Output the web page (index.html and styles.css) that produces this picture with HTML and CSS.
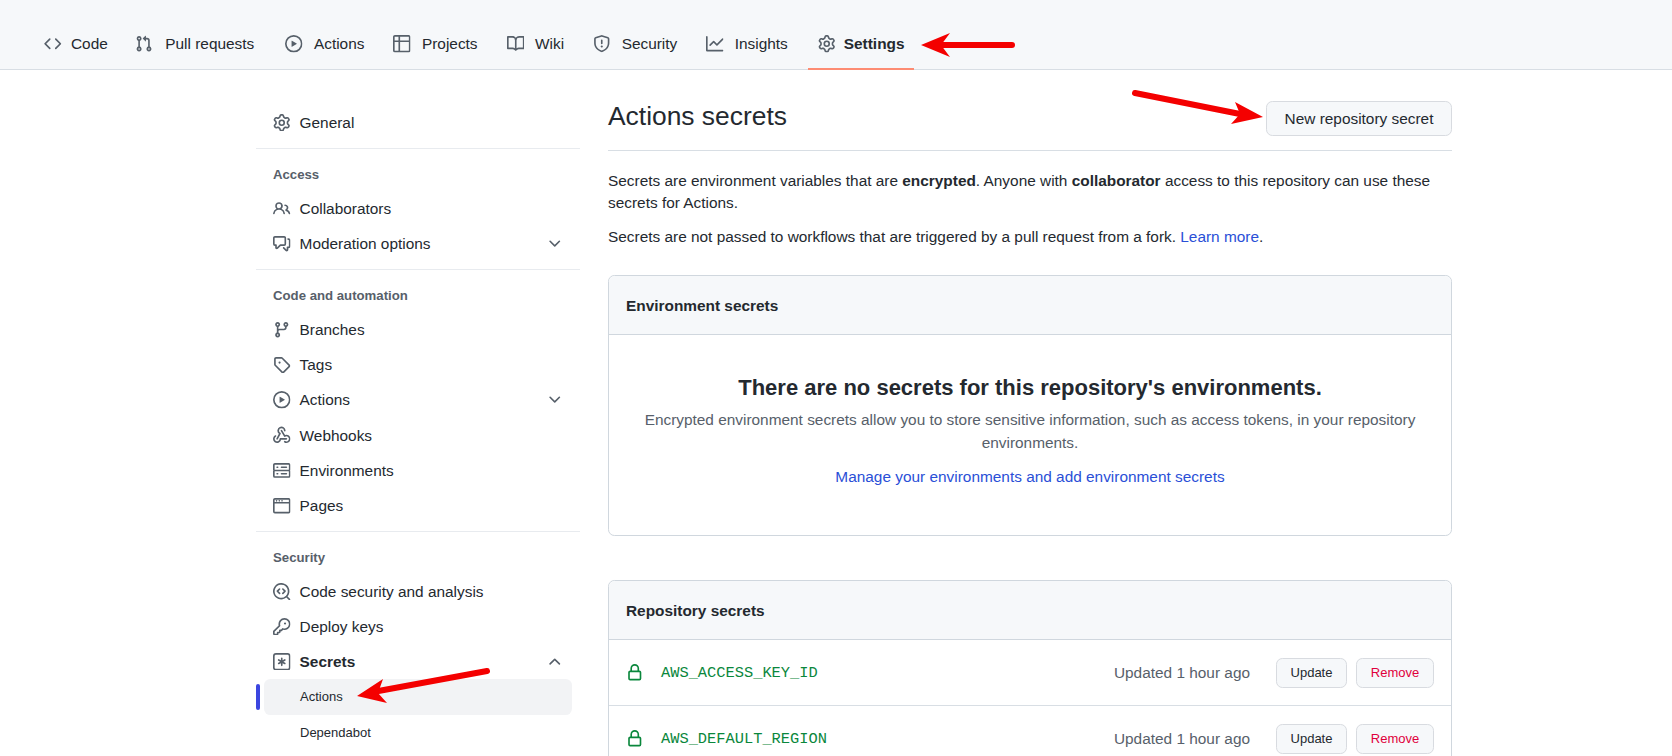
FILE: index.html
```html
<!DOCTYPE html>
<html lang="en">
<head>
    <meta charset="UTF-8">
    <meta name="viewport" content="width=device-width, initial-scale=1.0">
    <link rel="stylesheet" href="styles.css">
    <title>Actions secrets</title>
</head>
<body>
    <svg class="defs" width="0" height="0">
        <symbol id="i-code" viewBox="0 0 16 16"><path d="m11.28 3.22 4.25 4.25a.75.75 0 0 1 0 1.06l-4.25 4.25a.749.749 0 0 1-1.275-.326.749.749 0 0 1 .215-.734L13.94 8l-3.72-3.72a.749.749 0 0 1 .326-1.275.749.749 0 0 1 .734.215Zm-6.56 0a.751.751 0 0 1 1.042.018.751.751 0 0 1 .018 1.042L2.06 8l3.72 3.72a.749.749 0 0 1-.326 1.275.749.749 0 0 1-.734-.215L.47 8.53a.75.75 0 0 1 0-1.06Z"/></symbol>
        <symbol id="i-pr" viewBox="0 0 16 16"><path d="M1.5 3.25a2.25 2.25 0 1 1 3 2.122v5.256a2.251 2.251 0 1 1-1.5 0V5.372A2.25 2.25 0 0 1 1.5 3.25Zm5.677-.177L9.573.677A.25.25 0 0 1 10 .854V2.5h1A2.5 2.5 0 0 1 13.5 5v5.628a2.251 2.251 0 1 1-1.5 0V5a1 1 0 0 0-1-1h-1v1.646a.25.25 0 0 1-.427.177L7.177 3.427a.25.25 0 0 1 0-.354ZM3.75 2.5a.75.75 0 1 0 0 1.5.75.75 0 0 0 0-1.5Zm0 9.5a.75.75 0 1 0 0 1.5.75.75 0 0 0 0-1.5Zm8.25.75a.75.75 0 1 0 1.5 0 .75.75 0 0 0-1.5 0Z"/></symbol>
        <symbol id="i-play" viewBox="0 0 16 16"><path d="M8 0a8 8 0 1 1 0 16A8 8 0 0 1 8 0ZM1.5 8a6.5 6.5 0 1 0 13 0 6.5 6.5 0 0 0-13 0Zm4.879-2.773 4.264 2.559a.25.25 0 0 1 0 .428l-4.264 2.559A.25.25 0 0 1 6 10.559V5.442a.25.25 0 0 1 .379-.215Z"/></symbol>
        <symbol id="i-table" viewBox="0 0 16 16"><path d="M0 1.75C0 .784.784 0 1.75 0h12.5C15.216 0 16 .784 16 1.75v12.5A1.75 1.75 0 0 1 14.25 16H1.75A1.75 1.75 0 0 1 0 14.25ZM6.5 6.5v8h7.75a.25.25 0 0 0 .25-.25V6.5Zm8-1.5V1.75a.25.25 0 0 0-.25-.25H6.5V5Zm-13 1.5v7.75c0 .138.112.25.25.25H5v-8ZM5 5V1.5H1.75a.25.25 0 0 0-.25.25V5Z"/></symbol>
        <symbol id="i-book" viewBox="0 0 16 16"><path d="M0 1.75A.75.75 0 0 1 .75 1h4.253c1.227 0 2.317.59 3 1.501A3.743 3.743 0 0 1 11.006 1h4.245a.75.75 0 0 1 .75.75v10.5a.75.75 0 0 1-.75.75h-4.507a2.25 2.25 0 0 0-1.591.659l-.622.621a.75.75 0 0 1-1.06 0l-.622-.621A2.25 2.25 0 0 0 5.258 13H.75a.75.75 0 0 1-.75-.75Zm7.251 10.324.004-5.073-.002-2.253A2.25 2.25 0 0 0 5.003 2.5H1.5v9h3.757a3.75 3.75 0 0 1 1.994.574ZM8.755 4.75l-.004 7.322a3.752 3.752 0 0 1 1.992-.572H14.5v-9h-3.495a2.25 2.25 0 0 0-2.25 2.25Z"/></symbol>
        <symbol id="i-shield" viewBox="0 0 16 16"><path d="M7.467.133a1.748 1.748 0 0 1 1.066 0l5.25 1.68A1.75 1.75 0 0 1 15 3.48V7c0 1.566-.32 3.182-1.303 4.682-.983 1.498-2.585 2.813-5.032 3.855a1.697 1.697 0 0 1-1.33 0c-2.447-1.042-4.049-2.357-5.032-3.855C1.32 10.182 1 8.566 1 7V3.48a1.75 1.75 0 0 1 1.217-1.667Zm.61 1.429a.25.25 0 0 0-.153 0l-5.25 1.68a.25.25 0 0 0-.174.238V7c0 1.358.275 2.666 1.057 3.86.784 1.194 2.121 2.34 4.366 3.297a.196.196 0 0 0 .154 0c2.245-.956 3.582-2.104 4.366-3.298C13.225 9.666 13.5 8.36 13.5 7V3.48a.251.251 0 0 0-.174-.237l-5.25-1.68ZM8.75 4.75v3a.75.75 0 0 1-1.5 0v-3a.75.75 0 0 1 1.5 0ZM9 10.5a1 1 0 1 1-2 0 1 1 0 0 1 2 0Z"/></symbol>
        <symbol id="i-graph" viewBox="0 0 16 16"><path d="M1.5 1.75V13.5h13.75a.75.75 0 0 1 0 1.5H.75a.75.75 0 0 1-.75-.75V1.75a.75.75 0 0 1 1.5 0Zm14.28 2.53-5.25 5.25a.75.75 0 0 1-1.06 0L7 7.06 4.28 9.78a.751.751 0 0 1-1.042-.018.751.751 0 0 1-.018-1.042l3.25-3.25a.75.75 0 0 1 1.06 0L10 7.94l4.72-4.72a.751.751 0 0 1 1.042.018.751.751 0 0 1 .018 1.042Z"/></symbol>
        <symbol id="i-gear" viewBox="0 0 16 16"><path d="M8 0a8.2 8.2 0 0 1 .701.031C9.444.095 9.99.645 10.16 1.29l.288 1.107c.018.066.079.158.212.224.231.114.454.243.668.386.123.082.233.09.299.071l1.103-.303c.644-.176 1.392.021 1.82.63.27.385.506.792.704 1.218.315.675.111 1.422-.364 1.891l-.814.806c-.049.048-.098.147-.088.294.016.257.016.515 0 .772-.01.147.038.246.088.294l.814.806c.475.469.679 1.216.364 1.891a7.977 7.977 0 0 1-.704 1.217c-.428.61-1.176.807-1.82.63l-1.102-.302c-.067-.019-.177-.011-.3.071a5.909 5.909 0 0 1-.668.386c-.133.066-.194.158-.211.224l-.29 1.106c-.168.646-.715 1.196-1.458 1.26a8.006 8.006 0 0 1-1.402 0c-.743-.064-1.289-.614-1.458-1.26l-.289-1.106c-.018-.066-.079-.158-.212-.224a5.738 5.738 0 0 1-.668-.386c-.123-.082-.233-.09-.299-.071l-1.103.303c-.644.176-1.392-.021-1.82-.63a8.12 8.12 0 0 1-.704-1.218c-.315-.675-.111-1.422.363-1.891l.815-.806c.05-.048.098-.147.088-.294a6.214 6.214 0 0 1 0-.772c.01-.147-.038-.246-.088-.294l-.815-.806C.635 6.045.431 5.298.746 4.623a7.92 7.92 0 0 1 .704-1.217c.428-.61 1.176-.807 1.82-.63l1.102.302c.067.019.177.011.3-.071.214-.143.437-.272.668-.386.133-.066.194-.158.211-.224l.29-1.106C6.009.645 6.556.095 7.299.03 7.53.01 7.764 0 8 0Zm-.571 1.525c-.036.003-.108.036-.137.146l-.289 1.105c-.147.561-.549.967-.998 1.189-.173.086-.34.183-.5.29-.417.278-.97.423-1.529.27l-1.103-.303c-.109-.03-.175.016-.195.045-.22.312-.412.644-.573.99-.014.031-.021.11.059.19l.815.806c.411.406.562.957.53 1.456a4.709 4.709 0 0 0 0 .582c.032.499-.119 1.05-.53 1.456l-.815.806c-.081.08-.073.159-.059.19.162.346.353.677.573.989.02.03.085.076.195.046l1.102-.303c.56-.153 1.113-.008 1.53.27.161.107.328.204.501.29.447.222.85.629.997 1.189l.289 1.105c.029.109.101.143.137.146a6.6 6.6 0 0 0 1.142 0c.036-.003.108-.036.137-.146l.289-1.105c.147-.561.549-.967.998-1.189.173-.086.34-.183.5-.29.417-.278.97-.423 1.529-.27l1.103.303c.109.029.175-.016.195-.045.22-.313.411-.644.573-.99.014-.031.021-.11-.059-.19l-.815-.806c-.411-.406-.562-.957-.53-1.456a4.709 4.709 0 0 0 0-.582c-.032-.499.119-1.05.53-1.456l.815-.806c.081-.08.073-.159.059-.19a6.464 6.464 0 0 0-.573-.989c-.02-.03-.085-.076-.195-.046l-1.102.303c-.56.153-1.113.008-1.53-.27a4.44 4.44 0 0 0-.501-.29c-.447-.222-.85-.629-.997-1.189l-.289-1.105c-.029-.11-.101-.143-.137-.146a6.6 6.6 0 0 0-1.142 0ZM11 8a3 3 0 1 1-6 0 3 3 0 0 1 6 0ZM9.5 8a1.5 1.5 0 1 0-3.001.001A1.5 1.5 0 0 0 9.5 8Z"/></symbol>
        <symbol id="i-people" viewBox="0 0 16 16"><path d="M2 5.5a3.5 3.5 0 1 1 5.898 2.549 5.508 5.508 0 0 1 3.034 4.084.75.75 0 1 1-1.482.235 4 4 0 0 0-7.9 0 .75.75 0 0 1-1.482-.236A5.507 5.507 0 0 1 3.102 8.05 3.493 3.493 0 0 1 2 5.5ZM11 4a3.001 3.001 0 0 1 2.22 5.018 5.01 5.01 0 0 1 2.56 3.012.749.749 0 0 1-.885.954.752.752 0 0 1-.549-.514 3.507 3.507 0 0 0-2.522-2.372.75.75 0 0 1-.574-.73v-.352a.75.75 0 0 1 .416-.672A1.5 1.5 0 0 0 11 5.5.75.75 0 0 1 11 4Zm-5.5-.5a2 2 0 1 0-.001 3.999A2 2 0 0 0 5.5 3.5Z"/></symbol>
        <symbol id="i-comment" viewBox="0 0 16 16"><path d="M1.75 1h8.5c.966 0 1.75.784 1.75 1.75v5.5A1.75 1.75 0 0 1 10.25 10H7.061l-2.574 2.573A1.458 1.458 0 0 1 2 11.543V10h-.25A1.75 1.75 0 0 1 0 8.25v-5.5C0 1.784.784 1 1.75 1ZM1.5 2.75v5.5c0 .138.112.25.25.25h1a.75.75 0 0 1 .75.75v2.19l2.72-2.72a.749.749 0 0 1 .53-.22h3.5a.25.25 0 0 0 .25-.25v-5.5a.25.25 0 0 0-.25-.25h-8.5a.25.25 0 0 0-.25.25Zm13 2a.25.25 0 0 0-.25-.25h-.5a.75.75 0 0 1 0-1.5h.5c.966 0 1.75.784 1.75 1.75v5.5A1.75 1.75 0 0 1 14.25 12H14v1.543a1.458 1.458 0 0 1-2.487 1.03L9.22 12.28a.749.749 0 0 1 .326-1.275.749.749 0 0 1 .734.215l2.22 2.22v-2.19a.75.75 0 0 1 .75-.75h1a.25.25 0 0 0 .25-.25Z"/></symbol>
        <symbol id="i-down" viewBox="0 0 16 16"><path d="M12.78 5.22a.749.749 0 0 1 0 1.06l-4.25 4.25a.749.749 0 0 1-1.06 0L3.22 6.28a.749.749 0 1 1 1.06-1.06L8 8.939l3.72-3.719a.749.749 0 0 1 1.06 0Z"/></symbol>
        <symbol id="i-up" viewBox="0 0 16 16"><path d="M3.22 10.53a.749.749 0 0 1 0-1.06l4.25-4.25a.749.749 0 0 1 1.06 0l4.25 4.25a.749.749 0 1 1-1.06 1.06L8 6.811 4.28 10.53a.749.749 0 0 1-1.06 0Z"/></symbol>
        <symbol id="i-branch" viewBox="0 0 16 16"><path d="M9.5 3.25a2.25 2.25 0 1 1 3 2.122V6A2.5 2.5 0 0 1 10 8.5H6a1 1 0 0 0-1 1v1.128a2.251 2.251 0 1 1-1.5 0V5.372a2.25 2.25 0 1 1 1.5 0v1.836A2.493 2.493 0 0 1 6 7h4a1 1 0 0 0 1-1v-.628A2.25 2.25 0 0 1 9.5 3.25Zm-6 0a.75.75 0 1 0 1.5 0 .75.75 0 0 0-1.5 0Zm8.25-.75a.75.75 0 1 0 0 1.5.75.75 0 0 0 0-1.5ZM4.25 12a.75.75 0 1 0 0 1.5.75.75 0 0 0 0-1.5Z"/></symbol>
        <symbol id="i-tag" viewBox="0 0 16 16"><path d="M1 7.775V2.75C1 1.784 1.784 1 2.75 1h5.025c.464 0 .91.184 1.238.513l6.25 6.25a1.75 1.75 0 0 1 0 2.474l-5.026 5.026a1.75 1.75 0 0 1-2.474 0l-6.25-6.25A1.75 1.75 0 0 1 1 7.775Zm1.5 0c0 .066.026.13.073.177l6.25 6.25a.25.25 0 0 0 .354 0l5.025-5.025a.25.25 0 0 0 0-.354l-6.25-6.25a.25.25 0 0 0-.177-.073H2.75a.25.25 0 0 0-.25.25ZM6 5a1 1 0 1 1 0 2 1 1 0 0 1 0-2Z"/></symbol>
        <symbol id="i-webhook" viewBox="0 0 16 16"><path d="M5.5 4.25a2.25 2.25 0 0 1 4.5 0 .75.75 0 0 0 1.5 0 3.75 3.75 0 1 0-6.14 2.889l-2.272 4.258a.75.75 0 0 0 1.324.706L7 7.25a.75.75 0 0 0-.309-1.015A2.25 2.25 0 0 1 5.5 4.25Z"/><path d="M7.364 3.607a.75.75 0 0 1 1.03.257l2.608 4.349a3.75 3.75 0 1 1-.628 6.785.75.75 0 0 1 .752-1.299 2.25 2.25 0 1 0-.033-3.88.75.75 0 0 1-1.03-.256L7.107 4.636a.75.75 0 0 1 .257-1.03Z"/><path d="M2.9 8.776A.75.75 0 0 1 2.625 9.8 2.25 2.25 0 1 0 6 11.75a.75.75 0 0 1 .75-.751h5.5a.75.75 0 0 1 0 1.5H7.425a3.751 3.751 0 1 1-5.55-3.998.75.75 0 0 1 1.024.274Z"/></symbol>
        <symbol id="i-server" viewBox="0 0 16 16"><path d="M1.75 1h12.5c.966 0 1.75.784 1.75 1.75v4c0 .372-.116.717-.314 1 .198.283.314.628.314 1v4a1.75 1.75 0 0 1-1.75 1.75H1.75A1.75 1.75 0 0 1 0 12.75v-4c0-.358.109-.707.314-1a1.739 1.739 0 0 1-.314-1v-4C0 1.784.784 1 1.75 1ZM1.5 2.75v4c0 .138.112.25.25.25h12.5a.25.25 0 0 0 .25-.25v-4a.25.25 0 0 0-.25-.25H1.75a.25.25 0 0 0-.25.25Zm.25 5.75a.25.25 0 0 0-.25.25v4c0 .138.112.25.25.25h12.5a.25.25 0 0 0 .25-.25v-4a.25.25 0 0 0-.25-.25ZM7 4.75A.75.75 0 0 1 7.75 4h4.5a.75.75 0 0 1 0 1.5h-4.5A.75.75 0 0 1 7 4.75ZM7.75 10h4.5a.75.75 0 0 1 0 1.5h-4.5a.75.75 0 0 1 0-1.5ZM3 4.75A.75.75 0 0 1 3.75 4h.5a.75.75 0 0 1 0 1.5h-.5A.75.75 0 0 1 3 4.75ZM3.75 10h.5a.75.75 0 0 1 0 1.5h-.5a.75.75 0 0 1 0-1.5Z"/></symbol>
        <symbol id="i-browser" viewBox="0 0 16 16"><path d="M0 2.75C0 1.784.784 1 1.75 1h12.5c.966 0 1.75.784 1.75 1.75v10.5A1.75 1.75 0 0 1 14.25 15H1.75A1.75 1.75 0 0 1 0 13.25ZM14.5 6h-13v7.25c0 .138.112.25.25.25h12.5a.25.25 0 0 0 .25-.25Zm-13-1.5h13V2.75a.25.25 0 0 0-.25-.25H1.75a.25.25 0 0 0-.25.25ZM4 3.5a.75.75 0 1 1-1.5 0 .75.75 0 0 1 1.5 0ZM6.5 3.5a.75.75 0 1 1-1.5 0 .75.75 0 0 1 1.5 0ZM9 3.5a.75.75 0 1 1-1.5 0 .75.75 0 0 1 1.5 0Z"/></symbol>
        <symbol id="i-scan" viewBox="0 0 16 16"><path d="M8.47 4.97a.75.75 0 0 0 0 1.06L9.94 7.5 8.47 8.97a.75.75 0 1 0 1.06 1.06l2-2a.75.75 0 0 0 0-1.06l-2-2a.75.75 0 0 0-1.06 0ZM6.53 6.03a.75.75 0 0 0-1.06-1.06l-2 2a.75.75 0 0 0 0 1.06l2 2a.75.75 0 1 0 1.06-1.06L5.06 7.5l1.47-1.47Z"/><path d="M12.246 13.307a7.501 7.501 0 1 1 1.06-1.06l2.474 2.473a.749.749 0 0 1-.326 1.275.749.749 0 0 1-.734-.215ZM1.5 7.5a6.002 6.002 0 0 0 3.608 5.504 6.002 6.002 0 0 0 6.486-1.117.748.748 0 0 1 .292-.293A6 6 0 1 0 1.5 7.5Z"/></symbol>
        <symbol id="i-key" viewBox="0 0 16 16"><path d="M10.5 0a5.499 5.499 0 1 1-1.288 10.848l-.932.932a.749.749 0 0 1-.53.22H7v.75a.749.749 0 0 1-.22.53l-.5.5a.749.749 0 0 1-.53.22H5v.75a.749.749 0 0 1-.22.53l-.5.5a.749.749 0 0 1-.53.22h-2A1.75 1.75 0 0 1 0 14.25v-2c0-.199.079-.389.22-.53l4.932-4.932A5.5 5.5 0 0 1 10.5 0Zm-4 5.5c-.001.431.069.86.205 1.269a.75.75 0 0 1-.181.768L1.5 12.56v1.69c0 .138.112.25.25.25h1.69l.06-.06v-1.19a.75.75 0 0 1 .75-.75h1.19l.06-.06v-1.19a.75.75 0 0 1 .75-.75h1.19l1.023-1.025a.75.75 0 0 1 .768-.18A4 4 0 1 0 6.5 5.5ZM11 6a1 1 0 1 1 0-2 1 1 0 0 1 0 2Z"/></symbol>
        <symbol id="i-asterisk" viewBox="0 0 16 16"><path d="M0 2.75A2.75 2.75 0 0 1 2.75 0h10.5A2.75 2.75 0 0 1 16 2.75v10.5A2.75 2.75 0 0 1 13.25 16H2.75A2.75 2.75 0 0 1 0 13.25ZM2.75 1.5c-.69 0-1.25.56-1.25 1.25v10.5c0 .69.56 1.25 1.25 1.25h10.5c.69 0 1.25-.56 1.25-1.25V2.75c0-.69-.56-1.25-1.25-1.25Z"/><path d="M8 4a.75.75 0 0 1 .75.75V6.7l1.69-.975a.75.75 0 0 1 .75 1.3L9.5 8l1.69.976a.75.75 0 0 1-.75 1.298L8.75 9.3v1.951a.75.75 0 0 1-1.5 0V9.299l-1.69.975a.75.75 0 0 1-.75-1.298L6.5 8l-1.69-.975a.75.75 0 0 1 .75-1.3l1.69.976V4.75A.75.75 0 0 1 8 4Z"/></symbol>
        <symbol id="i-lock" viewBox="0 0 16 16"><path d="M4 4a4 4 0 0 1 8 0v2h.25c.966 0 1.75.784 1.75 1.75v5.5A1.75 1.75 0 0 1 12.25 15h-8.5A1.75 1.75 0 0 1 2 13.25v-5.5C2 6.784 2.784 6 3.75 6H4Zm8.25 3.5h-8.5a.25.25 0 0 0-.25.25v5.5c0 .138.112.25.25.25h8.5a.25.25 0 0 0 .25-.25v-5.5a.25.25 0 0 0-.25-.25ZM10.5 6V4a2.5 2.5 0 1 0-5 0v2Z"/></symbol>
    </svg>

    <div class="page">
        <nav class="tabs">
            <a class="tab tab-code"><svg class="icon"><use href="#i-code"/></svg>Code</a>
            <a class="tab tab-pr"><svg class="icon"><use href="#i-pr"/></svg>Pull requests</a>
            <a class="tab"><svg class="icon"><use href="#i-play"/></svg>Actions</a>
            <a class="tab"><svg class="icon"><use href="#i-table"/></svg>Projects</a>
            <a class="tab"><svg class="icon"><use href="#i-book"/></svg>Wiki</a>
            <a class="tab"><svg class="icon"><use href="#i-shield"/></svg>Security</a>
            <a class="tab"><svg class="icon"><use href="#i-graph"/></svg>Insights</a>
            <a class="tab selected"><svg class="icon"><use href="#i-gear"/></svg>Settings</a>
        </nav>

        <div class="layout">
            <aside class="sidebar">
                <a class="item"><svg class="icon"><use href="#i-gear"/></svg>General</a>
                <div class="divider"></div>
                <div class="heading">Access</div>
                <a class="item"><svg class="icon"><use href="#i-people"/></svg>Collaborators</a>
                <a class="item"><svg class="icon"><use href="#i-comment"/></svg>Moderation options<svg class="icon chevron"><use href="#i-down"/></svg></a>
                <div class="divider"></div>
                <div class="heading">Code and automation</div>
                <a class="item"><svg class="icon"><use href="#i-branch"/></svg>Branches</a>
                <a class="item"><svg class="icon"><use href="#i-tag"/></svg>Tags</a>
                <a class="item"><svg class="icon"><use href="#i-play"/></svg>Actions<svg class="icon chevron"><use href="#i-down"/></svg></a>
                <a class="item"><svg class="icon"><use href="#i-webhook"/></svg>Webhooks</a>
                <a class="item"><svg class="icon"><use href="#i-server"/></svg>Environments</a>
                <a class="item"><svg class="icon"><use href="#i-browser"/></svg>Pages</a>
                <div class="divider"></div>
                <div class="heading">Security</div>
                <a class="item"><svg class="icon"><use href="#i-scan"/></svg>Code security and analysis</a>
                <a class="item"><svg class="icon"><use href="#i-key"/></svg>Deploy keys</a>
                <a class="item current"><svg class="icon"><use href="#i-asterisk"/></svg>Secrets<svg class="icon chevron"><use href="#i-up"/></svg></a>
                <a class="subitem active">Actions</a>
                <a class="subitem">Dependabot</a>
            </aside>

            <main class="content">
                <div class="subhead">
                    <h2>Actions secrets</h2>
                    <a class="btn btn-new">New repository secret</a>
                </div>
                <p class="intro">Secrets are environment variables that are <b>encrypted</b>. Anyone with <b>collaborator</b> access to this repository can use these secrets for Actions.</p>
                <p class="intro last">Secrets are not passed to workflows that are triggered by a pull request from a fork. <a class="link">Learn more</a>.</p>

                <section class="box">
                    <div class="box-header">Environment secrets</div>
                    <div class="blank">
                        <h3>There are no secrets for this repository's environments.</h3>
                        <p>Encrypted environment secrets allow you to store sensitive information, such as access tokens, in your repository environments.</p>
                        <a class="link">Manage your environments and add environment secrets</a>
                    </div>
                </section>

                <section class="box">
                    <div class="box-header">Repository secrets</div>
                    <div class="row">
                        <svg class="icon lock"><use href="#i-lock"/></svg>
                        <code>AWS_ACCESS_KEY_ID</code>
                        <span class="updated">Updated 1 hour ago</span>
                        <a class="btn btn-sm">Update</a>
                        <a class="btn btn-sm danger">Remove</a>
                    </div>
                    <div class="row">
                        <svg class="icon lock"><use href="#i-lock"/></svg>
                        <code>AWS_DEFAULT_REGION</code>
                        <span class="updated">Updated 1 hour ago</span>
                        <a class="btn btn-sm">Update</a>
                        <a class="btn btn-sm danger">Remove</a>
                    </div>
                </section>
            </main>
        </div>

        <!-- red annotation arrows drawn on top of the screenshot -->
        <svg class="arrows" viewBox="0 0 1672 756">
            <path class="shaft" d="M1012 45H935"/>
            <path class="head" d="M921 45 950 33 941 45 950 57Z"/>
            <path class="shaft" d="M1135 93 1245 115"/>
            <path class="head" d="M1263 117 1235 102 1240 114 1231 124Z"/>
            <path class="shaft" d="M487 671 373 692"/>
            <path class="head" d="M357 696 383 679 378 693 387 703Z"/>
        </svg>
    </div>
</body>
</html>
```

FILE: styles.css
```css
*{
    box-sizing: border-box;
}
html,body{
    margin: 0;
    padding: 0;
}
body{
    background: #fff;
    color: #24292f;
    font-family: "Liberation Sans", Arial, sans-serif;
    font-size: 15.4px;
    line-height: 23.1px;
}
.defs{
    position: absolute;
}
.page{
    position: relative;
    height: 756px;
    overflow: hidden;
}
.icon{
    width: 17.5px;
    height: 17.5px;
    fill: #57606a;
    flex: none;
}

/* repo tabs */
.tabs{
    display: flex;
    align-items: flex-end;
    gap: 12px;
    height: 70px;
    padding-left: 35.5px;
    background: #f6f8fa;
    border-bottom: 1px solid #d8dee4;
}
.tab{
    display: flex;
    align-items: center;
    gap: 11px;
    height: 49px;
    margin-bottom: -1px;
    padding: 0 8.5px 1px;
    border-bottom: 2px solid transparent;
}
.tab-code{
    gap: 9.5px;
}
.tab-pr{
    gap: 12.5px;
    margin-left: -1.5px;
    padding-right: 10.7px;
}
.tab.selected{
    gap: 8.5px;
    padding: 0 9.5px 1px;
    font-weight: 700;
    border-bottom-color: #fd8c73;
}

.layout{
    display: flex;
    padding-left: 256px;
}

/* left menu */
.sidebar{
    width: 324px;
    padding-top: 35px;
    flex: none;
}
.item{
    display: flex;
    align-items: center;
    gap: 9.1px;
    height: 35.2px;
    padding: 0 17px;
}
.item.current{
    font-weight: 700;
}
.chevron{
    margin-left: auto;
}
.divider{
    height: 1px;
    margin-top: 7.5px;
    background: #e8ebef;
}
.heading{
    height: 42.2px;
    padding: 17px 17px 8px;
    line-height: 17px;
    font-size: 13.2px;
    font-weight: 700;
    color: #57606a;
}
.subitem{
    display: block;
    position: relative;
    height: 35.2px;
    margin: 0 8px;
    padding-left: 36px;
    font-size: 13px;
    line-height: 35.2px;
    border-radius: 6.4px;
}
.subitem.active{
    background: #f2f3f5;
}
.subitem.active::before{
    content: "";
    position: absolute;
    left: -8px;
    top: 5px;
    width: 4px;
    height: 25.6px;
    border-radius: 4px;
    background: #3b46e0;
}

/* main column */
.content{
    width: 844px;
    margin-left: 28px;
    padding-top: 31px;
}
.subhead{
    display: flex;
    justify-content: space-between;
    height: 50px;
    border-bottom: 1px solid #d8dee4;
}
.subhead h2{
    margin: 0;
    font-size: 26.4px;
    font-weight: 400;
    line-height: 30px;
}
.btn{
    display: inline-flex;
    align-items: center;
    justify-content: center;
    background: #f6f8fa;
    border: 1px solid #d8dbe0;
    border-radius: 6.4px;
}
.btn-new{
    width: 186px;
    height: 35px;
}
.intro{
    margin: 18.6px 0 0;
    line-height: 22.4px;
}
.intro + .intro{
    margin-top: 11.5px;
}
.link{
    color: #2a4fd7;
}
.box{
    margin-top: 44px;
    border: 1px solid #d0d7de;
    border-radius: 6.4px;
}
.intro.last + .box{
    margin-top: 26.7px;
}
.box-header{
    height: 59px;
    padding: 0 17px;
    background: #f6f8fa;
    border-bottom: 1px solid #d0d7de;
    border-radius: 6.4px 6.4px 0 0;
    font-weight: 700;
    line-height: 59px;
}
.blank{
    padding: 34.5px 32px 47.5px;
    text-align: center;
}
.blank h3{
    margin: 0 0 2px;
    font-size: 22px;
    line-height: 36px;
}
.blank p{
    margin: 0 0 11px;
    color: #57606a;
}

/* secret rows */
.row{
    display: flex;
    align-items: center;
    height: 66px;
    padding: 0 17px;
    border-bottom: 1px solid #d8dee4;
}
.lock{
    fill: #0a873c;
}
.row code{
    margin-left: 17.5px;
    padding-top: 2px;
    font-family: "Liberation Mono", monospace;
    font-size: 15.36px;
    color: #0a873c;
}
.updated{
    margin-left: auto;
    margin-right: 26px;
    color: #57606a;
}
.btn-sm{
    height: 30px;
    width: 71px;
    margin-right: 9px;
    font-size: 13px;
}
.btn-sm.danger{
    width: 78px;
    margin-right: 0;
    color: #e0003c;
}

/* annotations */
.arrows{
    position: absolute;
    left: 0;
    top: 0;
    width: 1672px;
    height: 756px;
    pointer-events: none;
}
.shaft{
    fill: none;
    stroke: #f40000;
    stroke-width: 6;
    stroke-linecap: round;
}
.head{
    fill: #f40000;
}
```
